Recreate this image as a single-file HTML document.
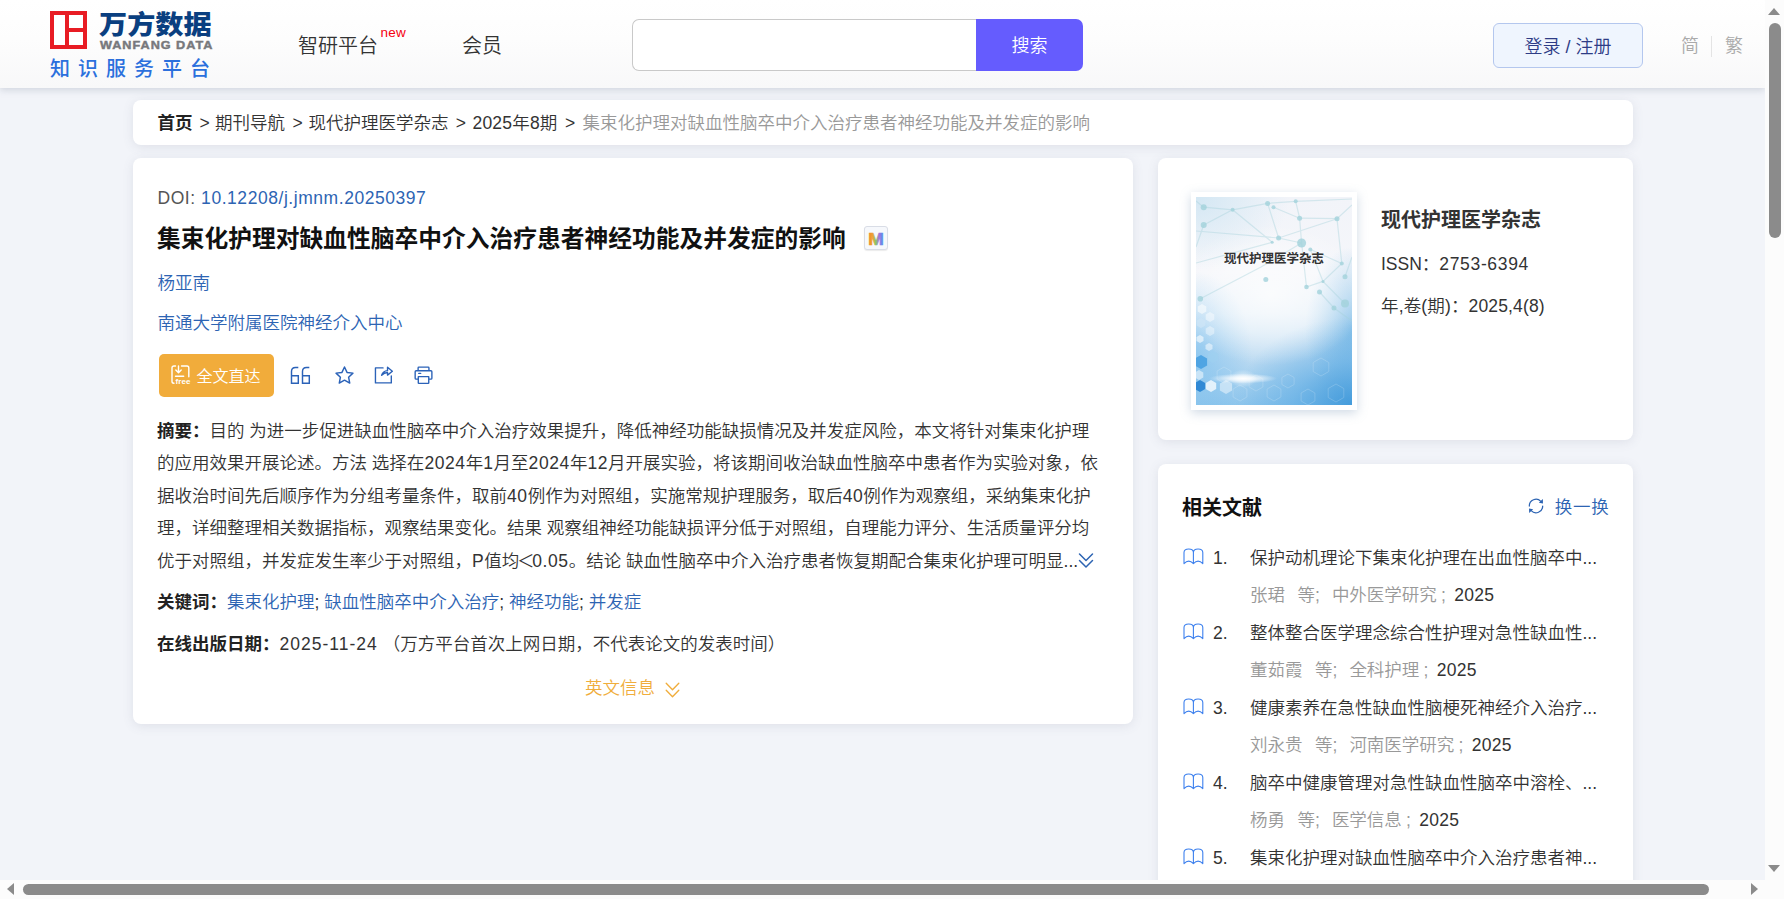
<!DOCTYPE html>
<html lang="zh-CN">
<head>
<meta charset="utf-8">
<title>集束化护理对缺血性脑卒中介入治疗患者神经功能及并发症的影响</title>
<style>
*{box-sizing:border-box;margin:0;padding:0}
html,body{width:1784px;height:899px;overflow:hidden;background:#f2f4f9}
body{font-family:"Liberation Sans","Noto Sans CJK SC",sans-serif;font-size:17.5px;font-weight:350;color:#333;position:relative}
a{text-decoration:none;color:inherit}
.abs{position:absolute}
/* ---------- header ---------- */
#hdr{position:absolute;left:0;top:0;width:1765px;height:88px;background:linear-gradient(#ffffff 0%,#fdfdfd 45%,#f8f8f9 100%);box-shadow:0 2px 7px rgba(120,130,150,.28)}
#logo-mark{position:absolute;left:50px;top:11px;width:37px;height:38px;background:#e81c24}
#logo-mark i{position:absolute;background:#fff;display:block}
#logo-cn{position:absolute;left:99px;top:4.5px;font-family:"Noto Sans CJK SC","Liberation Sans",sans-serif;font-weight:900;font-size:26.2px;line-height:36px;color:#0a3f80;white-space:nowrap;transform-origin:0 50%;transform:scaleX(1.075);letter-spacing:0}
#logo-en{position:absolute;left:99.5px;top:39px;font-family:"Liberation Sans",sans-serif;font-weight:bold;font-size:11.5px;line-height:13px;color:#77787c;white-space:nowrap;letter-spacing:.9px;transform-origin:0 50%;transform:scaleX(1.1);-webkit-text-stroke:.45px #77787c}
#logo-sub{position:absolute;left:50px;top:54px;font-family:"Noto Sans CJK SC","Liberation Sans",sans-serif;font-weight:500;font-size:20px;line-height:28px;color:#2b70dd;white-space:nowrap;letter-spacing:8px}
.nav{position:absolute;top:31px;font-size:20px;line-height:30px;color:#333;white-space:nowrap}
#new{position:absolute;left:380.500px;top:25px;font-size:13.500px;letter-spacing:.2px;line-height:16px;color:#f5000f}
#sbox{position:absolute;left:632px;top:19px;width:345px;height:52px;background:#fff;border:1px solid #c9c9c9;border-right:none;border-radius:7px 0 0 7px}
#sbtn{position:absolute;left:976px;top:19px;width:107px;height:52px;background:#655cfe;border-radius:0 7px 7px 0;color:#fff;font-size:18px;line-height:54px;text-align:center}
#login{position:absolute;left:1493px;top:23px;width:150px;height:45px;background:#eff5fe;border:1px solid #b4c7ee;border-radius:6px;color:#2e3c86;font-size:18px;line-height:46px;text-align:center;white-space:nowrap}
.lang{position:absolute;top:33px;font-size:18px;line-height:26px;color:#aaa}
#langsep{position:absolute;left:1711px;top:36px;width:1px;height:21px;background:#e4e4e4}
/* ---------- cards ---------- */
.card{position:absolute;background:#fff;border-radius:8px;box-shadow:0 2px 11px rgba(90,100,120,.13)}
#crumb{left:133px;top:100px;width:1500px;height:45px;font-size:17.5px;line-height:46px;white-space:nowrap;color:#333}
#crumb>*{position:absolute;top:0;font-style:normal}
#crumb b{color:#222}
#crumb .cur{color:#999}
#main{left:133px;top:158px;width:1000px;height:566px}
#jcard{left:1158px;top:158px;width:475px;height:282px}
#rel{left:1158px;top:464px;width:475px;height:440px}
.t{position:absolute;white-space:nowrap}
.blue{color:#2d64b3}

#ttl{font-size:23.75px;line-height:36px;font-weight:bold;color:#111}
#mbadge{position:absolute;left:731px;top:68px;width:24px;height:24px;border:1px solid #d9dde6;border-radius:3px;background:#f6f8fc;box-shadow:0 1px 1px rgba(0,0,0,.08)}
#mbadge span{position:absolute;left:3px;top:2px;width:18px;font-family:"Liberation Sans",sans-serif;font-weight:bold;font-size:17px;line-height:20px;text-align:center;background:linear-gradient(90deg,#f08a24 0%,#e8a33c 30%,#7cc66a 50%,#b06be0 70%,#3f9bea 100%);-webkit-background-clip:text;background-clip:text;color:transparent}
#ftbtn{position:absolute;left:26px;top:196px;width:115px;height:43px;background:#f1ac3b;border-radius:5px;color:#fff}
#ftbtn .free{position:absolute;left:16.500px;top:22.500px;font-size:8px;line-height:9px;font-weight:bold;font-family:"Liberation Sans",sans-serif;letter-spacing:.1px}
#ftbtn .lbl{position:absolute;left:37.500px;top:9.500px;font-size:16px;line-height:26px;white-space:nowrap}
#abs{position:absolute;left:24px;top:256.500px;width:960px;line-height:32.5px;color:#333;white-space:nowrap}
#abs b,#main b{color:#222}

#cover{position:absolute;left:33px;top:34px;width:166px;height:218px;background:#fff;box-shadow:0 3px 10px rgba(120,150,180,.35)}
#cvimg{position:absolute;left:5px;top:5px;width:156px;height:208px;overflow:hidden;background:
 radial-gradient(ellipse 62% 34% at 48% 47%,rgba(255,255,255,.75) 0%,rgba(255,255,255,.42) 55%,rgba(255,255,255,0) 100%),
 radial-gradient(ellipse 75% 42% at 100% 100%,rgba(55,148,216,.85) 0%,rgba(75,162,225,.45) 50%,rgba(90,170,230,0) 100%),
 radial-gradient(ellipse 30% 40% at 100% 64%,rgba(105,178,228,.7) 0%,rgba(110,180,228,0) 100%),
 radial-gradient(ellipse 36% 40% at 0% 76%,rgba(120,190,238,.65) 0%,rgba(120,190,238,0) 100%),
 radial-gradient(ellipse 60% 35% at 0% 0%,rgba(208,230,243,.9) 0%,rgba(205,228,242,0) 100%),
 linear-gradient(180deg,#f2f4f9 0%,#f5f6fa 36%,#e4eff8 56%,#bfdcf2 76%,#8fc6ec 100%)}
#cvt{position:absolute;left:0;top:53px;width:156px;text-align:center;font-size:12.5px;line-height:18px;font-weight:bold;color:#333;white-space:nowrap;letter-spacing:0}
.ri{position:absolute;left:0;width:475px;height:75px;white-space:nowrap;line-height:26px;color:#333}
.ri .bk{position:absolute;left:25px;top:2.500px}
.ri .n{position:absolute;left:55px;top:0}
.ri .rt{position:absolute;left:92px;top:0}
.ri .rm{position:absolute;left:92px;top:37px;color:#999}
.ri .rm em{font-style:normal;color:#333;margin-left:8.500px;letter-spacing:.3px}
.ri .s1{margin-left:12.500px}
.ri .s2{margin-left:12px}
.ri .s3{margin-left:4px}
#vsb{position:absolute;left:1765px;top:0;width:19px;height:899px;background:#fcfcfc}
#hsb{position:absolute;left:0;top:880px;width:1765px;height:19px;background:#fcfcfc}
#vsb i,#hsb i{position:absolute;display:block}
.vth{left:4px;top:23px;width:12px;height:215px;border-radius:6px;background:#8b8b8b}
.hth{left:23px;top:4px;width:1686px;height:11px;border-radius:5.5px;background:#8b8b8b}
.up{left:3px;top:8px;border:6.500px solid transparent;border-top:none;border-bottom:7px solid #8b8b8b}
.dn{left:3px;top:865px;border:6.500px solid transparent;border-bottom:none;border-top:7px solid #8b8b8b}
.lf{left:7px;top:3px;border:6.500px solid transparent;border-left:none;border-right:7px solid #8b8b8b}
.rg{left:1751px;top:3px;border:6.500px solid transparent;border-right:none;border-left:7px solid #8b8b8b}
.d{letter-spacing:.6px}
</style>
</head>
<body>
<!-- HEADER -->
<div id="hdr">
  <div id="logo-mark"><i style="left:4px;top:4px;width:11px;height:30px"></i><i style="left:19px;top:4px;width:14px;height:13px"></i><i style="left:19px;top:21px;width:14px;height:13px"></i></div>
  <div id="logo-cn">万方数据</div>
  <div id="logo-en">WANFANG DATA</div>
  <div id="logo-sub">知识服务平台</div>
  <div class="nav" style="left:298px">智研平台</div>
  <div id="new">new</div>
  <div class="nav" style="left:462px">会员</div>
  <div id="sbox"></div>
  <div id="sbtn">搜索</div>
  <div id="login">登录 / 注册</div>
  <div class="lang" style="left:1681px">简</div>
  <div id="langsep"></div>
  <div class="lang" style="left:1725px">繁</div>
</div>

<!-- BREADCRUMB -->
<div class="card" id="crumb">
  <b style="left:24.500px">首页</b><i style="left:66.500px">&gt;</i>
  <span style="left:82px">期刊导航</span><i style="left:159.500px">&gt;</i>
  <span style="left:175.500px">现代护理医学杂志</span><i style="left:322.800px">&gt;</i>
  <span style="left:339.500px;letter-spacing:.2px">2025年8期</span><i style="left:432px">&gt;</i>
  <span class="cur" style="left:449.500px">集束化护理对缺血性脑卒中介入治疗患者神经功能及并发症的影响</span>
</div>

<!-- MAIN -->
<div class="card" id="main">

  <div class="t" style="left:24.500px;top:26.500px;line-height:26px;color:#555;letter-spacing:.55px">DOI: <span class="blue">10.12208/j.jmnm.20250397</span></div>
  <h1 class="t" id="ttl" style="left:24px;top:62.500px">集束化护理对缺血性脑卒中介入治疗患者神经功能及并发症的影响</h1>
  <div id="mbadge"><svg width="22" height="22" viewBox="0 0 22 22" style="position:absolute;left:0;top:0"><defs><linearGradient id="mg" x1="0" y1="0" x2="1" y2="0"><stop offset="0" stop-color="#f08a24"/><stop offset=".3" stop-color="#eda23a"/><stop offset=".48" stop-color="#86c968"/><stop offset=".7" stop-color="#a96de0"/><stop offset="1" stop-color="#3d9cec"/></linearGradient></defs><text x="11" y="17.600" text-anchor="middle" font-family="Liberation Sans, sans-serif" font-weight="bold" font-size="16.500" fill="url(#mg)" stroke="url(#mg)" stroke-width=".7" textLength="15.500" lengthAdjust="spacingAndGlyphs">M</text></svg></div>
  <div class="t blue" style="left:24.500px;top:111.500px;line-height:26px">杨亚南</div>
  <div class="t blue" style="left:24.500px;top:152px;line-height:26px">南通大学附属医院神经介入中心</div>
  <div id="ftbtn">
    <svg width="20" height="20" viewBox="0 0 20 20" style="position:absolute;left:11.5px;top:10.500px" fill="none" stroke="#fff" stroke-width="1.400" stroke-linecap="round" stroke-linejoin="round"><path d="M4.500 1H3Q1 1 1 3V16.500Q1 18.300 3 18.300"/><path d="M10.500 1H16Q17.800 1 17.800 3V11.800"/><path d="M7.500 1V7.500M4.800 5 7.500 7.800 10.200 5M4.500 11.200H12.700"/></svg>
    <span class="free">free</span>
    <span class="lbl">全文直达</span>
  </div>
  <svg class="abs" style="left:157px;top:208px" width="21" height="19" viewBox="0 0 21 19" fill="none" stroke="#2b62b8" stroke-width="1.450"><path d="M8.300 1.500H5.500Q1.500 1.500 1.500 5.500V17.200H8.300V9.700H1.500"/><path d="M19.300 1.500H16.500Q12.500 1.500 12.500 5.500V17.200H19.300V9.700H12.500"/></svg>
  <svg class="abs" style="left:201.500px;top:207.500px" width="20" height="20" viewBox="0 0 20 20" fill="none" stroke="#2b62b8" stroke-width="1.450" stroke-linejoin="round"><path d="M9.50 1.00 L12.03 6.42 L17.96 7.15 L13.59 11.23 L14.73 17.10 L9.50 14.20 L4.27 17.10 L5.41 11.23 L1.04 7.15 L6.97 6.42z"/></svg>
  <svg class="abs" style="left:240.500px;top:207.500px" width="20" height="19" viewBox="0 0 21 20" fill="none" stroke="#2b62b8" stroke-width="1.450" stroke-linejoin="round" stroke-linecap="round"><path d="M9.500 2H1.500V17.800H18.200V10.500"/><path d="M8 9.800Q9.500 5.200 14.200 4.900V1.300L19.300 5.500 14.200 9.600V6.800Q10.500 6.800 8 9.800z"/></svg>
  <svg class="abs" style="left:280.500px;top:207.500px" width="20" height="19" viewBox="0 0 21 20" fill="none" stroke="#2b62b8" stroke-width="1.450" stroke-linejoin="round"><path d="M4.300 5V2Q4.300 1.200 5.100 1.200H14.900Q15.700 1.200 15.700 2V5"/><path d="M4.500 13.800H2.200Q1.200 13.800 1.200 12.800V6Q1.200 5 2.200 5H17.800Q18.800 5 18.800 6V12.800Q18.800 13.800 17.800 13.800H15.500"/><path d="M4.500 11.200H15.500V17.800Q15.500 18.300 15 18.300H5Q4.500 18.300 4.500 17.800z"/><path d="M5 7.800H7" stroke-linecap="round"/></svg>
  <div id="abs">
    <div><b>摘要：</b>目的 为进一步促进缺血性脑卒中介入治疗效果提升，降低神经功能缺损情况及并发症风险，本文将针对集束化护理</div>
    <div>的应用效果开展论述。方法 选择在<span class="d">2024</span>年<span class="d">1</span>月至<span class="d">2024</span>年<span class="d">12</span>月开展实验，将该期间收治缺血性脑卒中患者作为实验对象，依</div>
    <div>据收治时间先后顺序作为分组考量条件，取前<span class="d">40</span>例作为对照组，实施常规护理服务，取后<span class="d">40</span>例作为观察组，采纳集束化护</div>
    <div>理，详细整理相关数据指标，观察结果变化。结果 观察组神经功能缺损评分低于对照组，自理能力评分、生活质量评分均</div>
    <div>优于对照组，并发症发生率少于对照组，<span class="d">P</span>值均<span style="margin:0 -2.300px">＜</span><span class="d">0.05</span>。结论 缺血性脑卒中介入治疗患者恢复期配合集束化护理可明显...<svg width="16" height="17" viewBox="0 0 16 17" style="vertical-align:-2px;margin-left:0" fill="none" stroke="#2d64b3" stroke-width="1.500" stroke-linecap="round" stroke-linejoin="round"><path d="M1.500 2 8 8.500 14.500 2M1.500 8.500 8 15l6.500-6.500"/></svg></div>
  </div>
  <div class="t" style="left:24px;top:431px;line-height:26px"><b>关键词：</b><span class="blue">集束化护理</span>; <span class="blue">缺血性脑卒中介入治疗</span>; <span class="blue">神经功能</span>; <span class="blue">并发症</span></div>
  <div class="t" style="left:24px;top:473px;line-height:26px"><b>在线出版日期：</b><span style="letter-spacing:1px">2025-11-24</span><span style="margin-left:5px">（万方</span><span>平台首次上网日期，不代表论文的发表时间）</span></div>
  <div class="t" style="left:452px;top:517px;line-height:26px;color:#f0ad3c">英文信息<svg width="15" height="16" viewBox="0 0 15 16" style="vertical-align:-3.500px;margin-left:10px" fill="none" stroke="#f0ad3c" stroke-width="1.350" stroke-linecap="round" stroke-linejoin="round"><path d="M1.200 1.200 7.500 7.700 13.800 1.200M1.200 8.200 7.500 14.700l6.300-6.500"/></svg></div>

</div>

<!-- JOURNAL CARD -->
<div class="card" id="jcard">

  <div id="cover">
    <div id="cvimg">
      <svg width="156" height="208" viewBox="0 0 156 208" style="position:absolute;left:0;top:0">
        <g stroke="#a5d2db" stroke-width="1.200" opacity=".4" fill="none"><path d="M7.7 10.2 36.6 12.8 71.6 6.4 99.7 4.3 156 2"/><path d="M7.7 28 36.6 12.8 76.2 45.3"/><path d="M0 34 82.6 41 141 21.7 156 8"/><path d="M71.600 6.400 82.600 41 105.600 46"/><path d="M77.500 10.200 103.600 21.200 141 21.700"/><path d="M99.700 4.300 103.600 21.200 105.600 46 110.500 90"/><path d="M114.300 52.400 127 84.400 149 106.600"/><path d="M0 66 76.200 45.300"/><path d="M4.300 101.800 65 70 105.600 46"/><path d="M110.500 90 127 84.400 145.800 66.500 141 21.700"/><path d="M123.500 95 138 111 156 124"/><path d="M149 79.800 156 60M7.700 10.200 0 4M7.700 28 0 50M114.300 52.400 145.800 66.500"/></g>
        <g fill="#a3d3dc" opacity=".8"><circle cx="7.7" cy="10.2" r="3"/><circle cx="7.7" cy="28" r="3"/><circle cx="36.6" cy="12.8" r="2"/><circle cx="71.6" cy="6.4" r="2.5"/><circle cx="77.5" cy="10.2" r="2"/><circle cx="99.7" cy="4.3" r="2"/><circle cx="103.6" cy="21.2" r="2.5"/><circle cx="141" cy="21.7" r="2.5"/><circle cx="82.6" cy="41" r="2.5"/><circle cx="76.2" cy="45.3" r="1.5"/><circle cx="105.6" cy="46" r="4.5"/><circle cx="114.3" cy="52.4" r="2"/><circle cx="69.8" cy="82.6" r="2.5"/><circle cx="110.5" cy="90" r="2.3"/><circle cx="123.5" cy="95" r="2.5"/><circle cx="127" cy="84.4" r="1.5"/><circle cx="4.3" cy="101.8" r="2.8"/><circle cx="149" cy="106.6" r="4"/><circle cx="138" cy="111" r="2.5"/><circle cx="149" cy="79.8" r="2.5"/><circle cx="145.8" cy="66.5" r="2"/></g>
        <g><path d="M10.3 114.5 6.0 117.0 1.7 114.5 1.7 109.5 6.0 107.0 10.3 109.5z" fill="#ffffff" opacity="0.55"/><path d="M18.3 122.5 14.0 125.0 9.7 122.5 9.7 117.5 14.0 115.0 18.3 117.5z" fill="#ffffff" opacity="0.45"/><path d="M9.3 128.5 5.0 131.0 0.7 128.5 0.7 123.5 5.0 121.0 9.3 123.5z" fill="#cfe6f7" opacity="0.7"/><path d="M18.3 136.5 14.0 139.0 9.7 136.5 9.7 131.5 14.0 129.0 18.3 131.5z" fill="#ffffff" opacity="0.4"/><path d="M7.5 144.0 4.0 146.0 0.5 144.0 0.5 140.0 4.0 138.0 7.5 140.0z" fill="#ffffff" opacity="0.6"/><path d="M16.5 152.0 13.0 154.0 9.5 152.0 9.5 148.0 13.0 146.0 16.5 148.0z" fill="#ffffff" opacity="0.5"/><path d="M11.1 168.5 5.0 172.0 -1.1 168.5 -1.1 161.5 5.0 158.0 11.1 161.5z" fill="#3f9be0" opacity="0.8"/><path d="M22.2 163.0 17.0 166.0 11.8 163.0 11.8 157.0 17.0 154.0 22.2 157.0z" fill="#9fd0f0" opacity="0.6"/><path d="M9.2 192.0 4.0 195.0 -1.2 192.0 -1.2 186.0 4.0 183.0 9.2 186.0z" fill="#2b86d3" opacity="0.95"/><path d="M20.2 192.0 15.0 195.0 9.8 192.0 9.8 186.0 15.0 183.0 20.2 186.0z" fill="#ffffff" opacity="0.75"/><path d="M7.3 180.5 3.0 183.0 -1.3 180.5 -1.3 175.5 3.0 173.0 7.3 175.5z" fill="#ffffff" opacity="0.5"/><path d="M36.1 193.5 30.0 197.0 23.9 193.5 23.9 186.5 30.0 183.0 36.1 186.5z" fill="#ffffff" opacity="0.45"/></g>
        <g fill="none" stroke="#fff" stroke-width=".8" opacity=".22"><path d="M34.9 182.0 28.0 186.0 21.1 182.0 21.1 174.0 28.0 170.0 34.9 174.0z"/><path d="M50.9 200.0 44.0 204.0 37.1 200.0 37.1 192.0 44.0 188.0 50.9 192.0z"/><path d="M66.9 190.0 60.0 194.0 53.1 190.0 53.1 182.0 60.0 178.0 66.9 182.0z"/><path d="M84.9 200.0 78.0 204.0 71.1 200.0 71.1 192.0 78.0 188.0 84.9 192.0z"/><path d="M98.1 187.5 92.0 191.0 85.9 187.5 85.9 180.5 92.0 177.0 98.1 180.5z"/><path d="M132.8 174.5 125.0 179.0 117.2 174.5 117.2 165.5 125.0 161.0 132.8 165.5z"/><path d="M147.8 200.5 140.0 205.0 132.2 200.5 132.2 191.5 140.0 187.0 147.8 191.5z"/><path d="M118.9 204.0 112.0 208.0 105.1 204.0 105.1 196.0 112.0 192.0 118.9 196.0z"/></g>
        <defs><radialGradient id="glow"><stop offset="0" stop-color="#fff" stop-opacity="1"/><stop offset=".4" stop-color="#fff" stop-opacity=".7"/><stop offset="1" stop-color="#fff" stop-opacity="0"/></radialGradient></defs>
        <ellipse cx="47" cy="181.500" rx="34" ry="5" fill="url(#glow)"/><ellipse cx="47" cy="181.500" rx="14" ry="9" fill="url(#glow)" opacity=".6"/>
      </svg>
      <div id="cvt">现代护理医学杂志</div>
    </div>
  </div>
  <div class="t" style="left:223px;top:47px;font-size:20px;line-height:30px;font-weight:bold;color:#333">现代护理医学杂志</div>
  <div class="t" style="left:223px;top:92.500px;line-height:26px;color:#333">ISSN：<span style="letter-spacing:.65px">2753-6394</span></div>
  <div class="t" style="left:223px;top:134.500px;line-height:26px;color:#333;letter-spacing:.15px">年,卷(期)：2025,4(8)</div>

</div>

<!-- RELATED -->
<div class="card" id="rel">

  <div class="t" style="left:24px;top:29px;font-size:20px;line-height:30px;font-weight:bold;color:#111">相关文献</div>
  <svg class="abs" style="left:369.500px;top:34.300px" width="16" height="16" viewBox="0 0 16 16"><path d="M1.30 8.00A6.7 6.7 0 0 1 12.82 3.35M14.70 8.00A6.7 6.7 0 0 1 3.18 12.65" fill="none" stroke="#2d64b3" stroke-width="1.250" stroke-linecap="round"/><path d="M14.97 5.58L14.84 0.98L10.83 4.85zM1.03 10.42L1.16 15.02L5.17 11.15z" fill="#2d64b3"/></svg>
  <div class="t blue" style="left:396.800px;top:30px;line-height:26px;letter-spacing:.7px">换一换</div>
  <div class="ri" style="top:81px"><svg class="bk" width="21" height="17" viewBox="0 0 21 17" fill="none" stroke="#3d80ee" stroke-width="1.100" stroke-linejoin="round" stroke-linecap="round"><path d="M1 15.600V4.500Q1 1 5.700 1Q10.400 1 10.400 4.500V15.600Q5.700 10.600 1 15.600zM10.400 15.600Q15.100 10.600 19.800 15.600V4.500Q19.800 1 15.100 1Q10.400 1 10.400 4.500"/></svg><span class="n">1.</span><span class="rt">保护动机理论下集束化护理在出血性脑卒中...</span><div class="rm">张珺<span class="s1">等;</span><span class="s2">中外医学研究</span><span class="s3">;</span><em>2025</em></div></div>
  <div class="ri" style="top:156px"><svg class="bk" width="21" height="17" viewBox="0 0 21 17" fill="none" stroke="#3d80ee" stroke-width="1.100" stroke-linejoin="round" stroke-linecap="round"><path d="M1 15.600V4.500Q1 1 5.700 1Q10.400 1 10.400 4.500V15.600Q5.700 10.600 1 15.600zM10.400 15.600Q15.100 10.600 19.800 15.600V4.500Q19.800 1 15.100 1Q10.400 1 10.400 4.500"/></svg><span class="n">2.</span><span class="rt">整体整合医学理念综合性护理对急性缺血性...</span><div class="rm">董茹霞<span class="s1">等;</span><span class="s2">全科护理</span><span class="s3">;</span><em>2025</em></div></div>
  <div class="ri" style="top:231px"><svg class="bk" width="21" height="17" viewBox="0 0 21 17" fill="none" stroke="#3d80ee" stroke-width="1.100" stroke-linejoin="round" stroke-linecap="round"><path d="M1 15.600V4.500Q1 1 5.700 1Q10.400 1 10.400 4.500V15.600Q5.700 10.600 1 15.600zM10.400 15.600Q15.100 10.600 19.800 15.600V4.500Q19.800 1 15.100 1Q10.400 1 10.400 4.500"/></svg><span class="n">3.</span><span class="rt">健康素养在急性缺血性脑梗死神经介入治疗...</span><div class="rm">刘永贵<span class="s1">等;</span><span class="s2">河南医学研究</span><span class="s3">;</span><em>2025</em></div></div>
  <div class="ri" style="top:306px"><svg class="bk" width="21" height="17" viewBox="0 0 21 17" fill="none" stroke="#3d80ee" stroke-width="1.100" stroke-linejoin="round" stroke-linecap="round"><path d="M1 15.600V4.500Q1 1 5.700 1Q10.400 1 10.400 4.500V15.600Q5.700 10.600 1 15.600zM10.400 15.600Q15.100 10.600 19.800 15.600V4.500Q19.800 1 15.100 1Q10.400 1 10.400 4.500"/></svg><span class="n">4.</span><span class="rt">脑卒中健康管理对急性缺血性脑卒中溶栓、...</span><div class="rm">杨勇<span class="s1">等;</span><span class="s2">医学信息</span><span class="s3">;</span><em>2025</em></div></div>
  <div class="ri" style="top:381px"><svg class="bk" width="21" height="17" viewBox="0 0 21 17" fill="none" stroke="#3d80ee" stroke-width="1.100" stroke-linejoin="round" stroke-linecap="round"><path d="M1 15.600V4.500Q1 1 5.700 1Q10.400 1 10.400 4.500V15.600Q5.700 10.600 1 15.600zM10.400 15.600Q15.100 10.600 19.800 15.600V4.500Q19.800 1 15.100 1Q10.400 1 10.400 4.500"/></svg><span class="n">5.</span><span class="rt">集束化护理对缺血性脑卒中介入治疗患者神...</span><div class="rm">王丽<span class="s1">等;</span><span class="s2">护理研究</span><span class="s3">;</span><em>2025</em></div></div>

</div>


<div id="vsb"><i class="up"></i><i class="vth"></i><i class="dn"></i></div>
<div id="hsb"><i class="lf"></i><i class="hth"></i><i class="rg"></i></div>

</body>
</html>
